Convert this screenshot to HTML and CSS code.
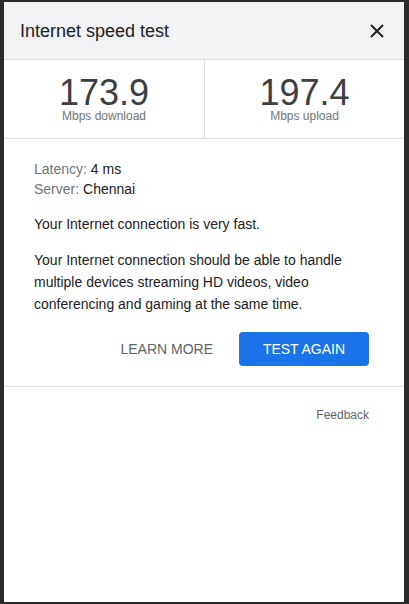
FILE: index.html
```html
<!DOCTYPE html>
<html lang="en">
<head>
<meta charset="utf-8">
<title>Internet speed test</title>
<link rel="stylesheet" href="styles.css">
</head>
<body>
<div class="dialog">
  <header class="header">
    <h1 class="title">Internet speed test</h1>
    <button class="close" aria-label="Close">
      <svg width="14" height="14" viewBox="0 0 14 14"><path d="M1 1L13 13M13 1L1 13" stroke="#202124" stroke-width="2" fill="none"/></svg>
    </button>
  </header>
  <div class="speeds">
    <div class="speed">
      <div class="num">173.9</div>
      <div class="unit">Mbps download</div>
    </div>
    <div class="speed speed-right">
      <div class="num">197.4</div>
      <div class="unit">Mbps upload</div>
    </div>
  </div>
  <div class="content">
    <div class="meta">
      <div><span class="label">Latency:</span> 4 ms</div>
      <div><span class="label">Server:</span> Chennai</div>
    </div>
    <p class="para">Your Internet connection is very fast.</p>
    <p class="para">Your Internet connection should be able to handle multiple devices streaming HD videos, video conferencing and gaming at the same time.</p>
    <div class="actions">
      <button class="btn-text">LEARN MORE</button>
      <button class="btn-primary">TEST AGAIN</button>
    </div>
  </div>
  <div class="footer">
    <span class="feedback">Feedback</span>
  </div>
</div>
</body>
</html>
```

FILE: styles.css
```css
html, body {
  margin: 0;
  padding: 0;
  height: 100%;
}
body {
  background: #2b2b2b;
  font-family: Arial, "Liberation Sans", sans-serif;
  color: #202124;
  padding: 2px 5px 2px 4px;
  box-sizing: border-box;
}
.dialog {
  background: #fff;
  height: 100%;
  display: flex;
  flex-direction: column;
}
.header {
  background: #f1f3f4;
  height: 56px;
  border-bottom: 1px solid #dadce0;
  display: flex;
  align-items: center;
  justify-content: space-between;
  padding: 1px 20px 0 16px;
}
.title {
  margin: 0;
  font-size: 18px;
  font-weight: normal;
  line-height: 26px;
  color: #202124;
}
.close {
  background: none;
  border: 0;
  padding: 0;
  width: 14px;
  height: 14px;
  display: flex;
  margin-top: -1px;
}
.speeds {
  display: grid;
  grid-template-columns: 1fr 1fr;
  border-bottom: 1px solid #dadce0;
}
.speed {
  text-align: center;
  padding: 17px 0 15px;
}
.speed-right {
  border-left: 1px solid #dadce0;
}
.num {
  font-size: 36px;
  line-height: 32px;
  color: #3c4043;
}
.unit {
  font-size: 12px;
  line-height: 14px;
  color: #70757a;
}
.content {
  padding: 20px 35px 20px 30px;
  border-bottom: 1px solid #dadce0;
  font-size: 14px;
}
.meta {
  line-height: 20px;
}
.label {
  color: #70757a;
}
.para {
  margin: 14px 0 0;
  line-height: 22px;
}
.actions {
  display: flex;
  justify-content: flex-end;
  align-items: center;
  margin-top: 17px;
}
.btn-text {
  background: none;
  border: 0;
  font-family: inherit;
  font-size: 14px;
  line-height: 34px;
  height: 34px;
  padding: 0 16px;
  margin-right: 10px;
  color: #5f6368;
}
.btn-primary {
  background: #1a73e8;
  color: #fff;
  border: 0;
  border-radius: 4px;
  font-family: inherit;
  font-size: 14px;
  line-height: 34px;
  height: 34px;
  width: 130px;
  padding: 0;
}
.footer {
  display: flex;
  justify-content: flex-end;
  padding: 20px 35px 0 0;
}
.feedback {
  font-size: 12px;
  line-height: 16px;
  color: #5f6368;
}
```
